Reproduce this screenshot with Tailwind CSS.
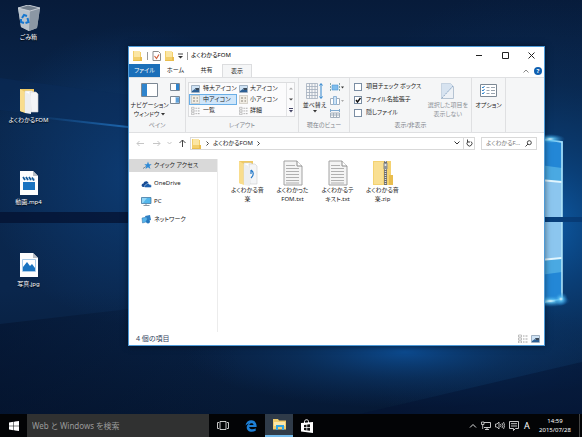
<!DOCTYPE html>
<html lang="ja">
<head>
  <meta charset="UTF-8" />
  <meta name="viewport" content="width=device-width, initial-scale=1.0"/>
  <title>よくわかるFOM</title>
  <script src="https://cdn.jsdelivr.net/npm/@tailwindcss/browser@4"></script>
</head>
<body class="h-screen flex flex-col overflow-hidden bg-[#06183a] font-['Noto_Sans','Noto_Sans_CJK_JP',sans-serif] text-[6px] leading-[9px] text-[#222] [font-feature-settings:'palt']">

  <!-- Shared shapes -->
  <svg class="hidden">
    <symbol id="folder" viewBox="0 0 9 11">
      <path d="M0 1h4l1 1h3v8H0z" fill="#f3cf6b"/>
      <path d="M1 1h6v6H1z" fill="#fbe6a4"/>
      <path d="M7 7h2v4H0V10h7z" fill="#e9bd4e"/>
    </symbol>
    <symbol id="text-file" viewBox="0 0 20 26">
      <path d="M1 1h13l5 5v19H1z" fill="#f4f4f4" stroke="#a2a2a2"/>
      <path d="M14 1v5h5" fill="#fff" stroke="#8c8c8c"/>
      <path d="M3 5.500h9M3 8.500h13M3 11.500h13M3 14.500h13M3 17.500h13M3 20.500h13M3 23h13" stroke="#b0b0b0"/>
    </symbol>
    <symbol id="open-folder" viewBox="0 0 20 26">
      <path d="M1 1h14v23H4l-3-1z" fill="#eec964"/>
      <path d="M1 1l5 3v21l-5-2z" fill="#f9dd8d"/>
      <path d="M6 3h7l2 2v18H6z" fill="#fff" stroke="#d5d5d5" stroke-width=".6"/>
      <path d="M11 4h6l2 2v18h-7z" fill="#f4f5f7" stroke="#cfcfcf" stroke-width=".6"/>
      <path d="M6 4v21l6 1V8l-3-3z" fill="#eceef1"/>
    </symbol>
    <symbol id="list-icon" viewBox="0 0 10 9">
      <path d="M.5 1h3v2h-3zM.5 4h3v2h-3zM.5 7h3v2h-3z" fill="#fff" stroke="#9a9a9a" stroke-width=".6"/>
      <path d="M5 2h1.500M7.500 2H9.500M5 5h1.500M7.500 5H9.500M5 8h1.500M7.500 8H9.500" stroke="#8b8b8b" stroke-width=".8"/>
    </symbol>
    <symbol id="picture" viewBox="0 0 9 8">
      <path d="M.5.5h8v7h-8z" fill="#cfe3f5" stroke="#9fb0c2"/>
      <path d="M1 6l3-2 1 1 3-2v4H1z" fill="#2c5f94"/>
      <path d="M4 3h4v2H5z" fill="#3a4a5a"/>
    </symbol>
    <symbol id="tiles" viewBox="0 0 9 9">
      <path d="M.5.5h8v8h-8z" fill="#f1ede4" stroke="#b8b2a6" stroke-dasharray="1 1"/>
      <path d="M2 3h2M5.500 3h1.500M2 6h2M5.500 6h1.500" stroke="#8a8478" stroke-width="1.200"/>
    </symbol>
    <symbol id="blank-file" viewBox="0 0 18 24">
      <path d="M0 0h13l5 5v19H0z" fill="#fdfdfd"/>
      <path d="M13 0v5h5z" fill="#b9bfc6"/>
    </symbol>
  </svg>

  <main class="relative flex-1 min-h-0">

    <!-- Wallpaper -->
    <svg class="absolute inset-0 w-full h-full" viewBox="0 0 582 414" preserveAspectRatio="none" aria-hidden="true">
      <defs>
        <radialGradient id="glow" cx="545" cy="225" r="240" gradientUnits="userSpaceOnUse">
          <stop offset="0" stop-color="#0d5ba6"/>
          <stop offset=".25" stop-color="#0a4582" stop-opacity=".8"/>
          <stop offset=".6" stop-color="#0a3464" stop-opacity=".3"/>
          <stop offset="1" stop-color="#0a2d5a" stop-opacity="0"/>
        </radialGradient>
        <radialGradient id="left-glow" cx="135" cy="175" r="150" gradientUnits="userSpaceOnUse">
          <stop offset="0" stop-color="#0d3d76" stop-opacity=".9"/>
          <stop offset="1" stop-color="#0d3d76" stop-opacity="0"/>
        </radialGradient>
        <radialGradient id="floor-glow">
          <stop offset="0" stop-color="#0c4a8e"/>
          <stop offset=".5" stop-color="#0b3566" stop-opacity=".6"/>
          <stop offset="1" stop-color="#0a2d5a" stop-opacity="0"/>
        </radialGradient>
        <radialGradient id="flare">
          <stop offset="0" stop-color="#e8fbff"/>
          <stop offset=".3" stop-color="#5cc4f5" stop-opacity=".8"/>
          <stop offset="1" stop-color="#1a7fd0" stop-opacity="0"/>
        </radialGradient>
        <linearGradient id="beam">
          <stop offset="0" stop-color="#1d66ad" stop-opacity="0"/>
          <stop offset="1" stop-color="#1d66ad"/>
        </linearGradient>
        <linearGradient id="shade">
          <stop offset="0" stop-color="#031029" stop-opacity=".5"/>
          <stop offset="1" stop-color="#031029" stop-opacity="0"/>
        </linearGradient>
        <linearGradient id="base" x2="0" y2="1">
          <stop offset="0" stop-color="#071b3a"/>
          <stop offset=".3" stop-color="#0a284f"/>
          <stop offset=".7" stop-color="#0a264c"/>
          <stop offset="1" stop-color="#061935"/>
        </linearGradient>
      </defs>
      <path d="M0 0h582v414H0z" fill="url(#base)"/>
      <path d="M0 0h582v414H0z" fill="url(#left-glow)"/>
      <path d="M0 0h582v414H0z" fill="url(#glow)"/>
      <ellipse cx="405" cy="352" rx="220" ry="56" fill="url(#floor-glow)"/>
      <path d="M0 78l128 17v32L0 110z" fill="#0a2c59" opacity=".5"/>
      <path d="M30 115l98 11v2L30 117z" fill="url(#beam)"/>
      <path d="M0 212h128v11H0z" fill="#041130" opacity=".75"/>
      <path d="M0 324l240-28v118H0z" fill="url(#shade)"/>
      <path d="M360 414l222-52v52z" fill="#041130" opacity=".45"/>
      <!-- Window panes -->
      <path d="M540 139l23 2-1 76h-22z" fill="#2387d6"/>
      <path d="M540 165l22 3v49h-22z" fill="#4aa9e2"/>
      <path d="M540 180l22 2v35h-22z" fill="#8cc6ef"/>
      <path d="M540 180l22 2" stroke="#e2f6ff" stroke-width="2"/>
      <path d="M540 222h22v77l-22 5z" fill="#2387d6"/>
      <path d="M540 222h22v50l-22 3z" fill="#4aa9e2"/>
      <path d="M540 222h22v36l-22 2z" fill="#8cc6ef"/>
      <path d="M540 260l22-2" stroke="#e2f6ff" stroke-width="2"/>
      <path d="M540 139l22 3v75M562 222v77l-22 4" fill="none" stroke="#b5e9fc" stroke-width="1.500"/>
      <path d="M540 217h42v5h-42z" fill="#06356c" opacity=".7"/>
      <ellipse cx="550" cy="301" rx="20" ry="6" fill="url(#flare)"/>
      <circle cx="561" cy="299" r="7" fill="url(#flare)"/>
      <ellipse cx="550" cy="139" rx="15" ry="5" fill="url(#flare)"/>
    </svg>

    <!-- Desktop icons -->
    <ul class="relative w-[57px] text-white text-center [text-shadow:0_1px_1px_#000]">
      <li class="h-[83px] pt-[5px]">
        <svg class="mx-auto w-[22px] h-[26px]" viewBox="0 0 22 26">
          <path d="M0 3l10-3 12 3-3 20-8 3-8-4z" fill="#aeb8c2"/>
          <path d="M0 3l12 2-1 21-8-4z" fill="#b9c3cc"/>
          <path d="M12 5l10-2-3 20-8 3z" fill="#8b97a4"/>
          <path d="M0 3l10-3 12 3-10 3z" fill="#717e8c" stroke="#d5dbe1" stroke-width=".8"/>
          <path d="M4 13l2-3 3 1M9.500 13l1 4-3 1M6 18l-3-1v-3" fill="none" stroke="#1677cf" stroke-width="2"/>
        </svg>
        <span class="block mt-[2px]">ごみ箱</span>
      </li>
      <li class="h-[82px] pt-[5px]">
        <svg class="mx-auto w-[20px] h-[26px]"><use href="#open-folder"/></svg>
        <span class="block mt-[2px] whitespace-nowrap">よくわかるFOM</span>
      </li>
      <li class="h-[83px] pt-[6px]">
        <svg class="mx-auto w-[18px] h-[24px]" viewBox="0 0 18 24">
          <use href="#blank-file"/>
          <path d="M3 11h12v8H3z" fill="#1a73c0"/>
          <path d="M3 6l12 1v3L3 9z" fill="#d7e7f5"/>
          <path d="M3 6l2 3M6 6l2 3M9 6l2 3M12 6.500l2 3" stroke="#155a99" stroke-width="1.600"/>
        </svg>
        <span class="block mt-[3px]">動画.mp4</span>
      </li>
      <li class="pt-[5px]">
        <svg class="mx-auto w-[18px] h-[24px]" viewBox="0 0 18 24">
          <use href="#blank-file"/>
          <path d="M2.500 6.500h13v12h-13z" fill="#fff" stroke="#a9cbe8"/>
          <path d="M3 18v-4l4-5 3 4 2-2 3 4v3z" fill="#1a73c0"/>
        </svg>
        <span class="block mt-[3px]">写真.jpg</span>
      </li>
    </ul>

    <!-- Explorer window -->
    <section class="absolute left-[128px] right-[37px] top-[46px] bottom-[68px] flex flex-col bg-white border border-[#4e9bd8] shadow-[0_0_6px_rgba(0,0,0,0.5)]">

      <header class="h-[17px] shrink-0 flex items-center pl-1">
        <svg class="w-[9px] h-[11px]"><use href="#folder"/></svg>
        <i class="w-px h-2 ml-[5px] bg-[#999]"></i>
        <button aria-label="プロパティ" class="ml-1">
          <svg class="w-[9px] h-[10px]" viewBox="0 0 9 10"><path d="M1 .5h5.500l2 2v7H1z" fill="#fff" stroke="#8c8c8c"/><path d="M2.500 5l2 2.500L7 3.500" fill="none" stroke="#d2603a" stroke-width="1.200"/></svg>
        </button>
        <button aria-label="新しいフォルダー" class="ml-1"><svg class="w-[9px] h-[11px]"><use href="#folder"/></svg></button>
        <button aria-label="カスタマイズ" class="ml-1"><svg class="w-[5px] h-[6px]" viewBox="0 0 5 6"><path d="M0 1h5" stroke="#444"/><path d="M0 3h5L2.500 5.500z" fill="#333"/></svg></button>
        <i class="w-px h-2 ml-1 bg-[#999]"></i>
        <h1 class="ml-[3px] text-black">よくわかるFOM</h1>
        <div class="ml-auto flex text-black">
          <button aria-label="最小化" class="w-[26px] grid place-items-center"><svg class="w-[7px] h-[7px]" viewBox="0 0 7 7"><path d="M0 3.500h6" stroke="#222"/></svg></button>
          <button aria-label="最大化" class="w-[26px] grid place-items-center"><svg class="w-[7px] h-[7px]" viewBox="0 0 7 7"><path d="M.5.5h6v6h-6z" fill="none" stroke="#222"/></svg></button>
          <button aria-label="閉じる" class="w-[26px] grid place-items-center"><svg class="w-[7px] h-[7px]" viewBox="0 0 7 7"><path d="M.5.5l6 6M6.500.5l-6 6" stroke="#222"/></svg></button>
        </div>
      </header>

      <nav class="h-[13px] shrink-0 flex">
        <button class="w-[31px] bg-[#1b6fb9] text-white">ファイル</button>
        <button class="w-[31px]">ホーム</button>
        <button class="w-[31px]">共有</button>
        <button class="w-[30px] -mb-px bg-[#f5f6f7] border border-b-0 border-[#dcdddf]">表示</button>
        <button aria-label="リボンの最小化" class="ml-auto"><svg class="w-[6px] h-[4px]" viewBox="0 0 6 4"><path d="M.5 3.500L3 1l2.500 2.500" fill="none" stroke="#888"/></svg></button>
        <button aria-label="ヘルプ" class="mx-[2px] ml-[5px] self-center size-[8px] rounded-full bg-[#0f5fb0] text-white leading-[8px] font-bold">?</button>
      </nav>

      <!-- Ribbon -->
      <div class="h-[56px] shrink-0 flex bg-[#f5f6f7] border-y border-[#dfe0e2] overflow-hidden whitespace-nowrap">
        <div class="w-[57px] flex flex-col border-r border-[#dfe0e2]">
          <div class="flex-1 flex pt-[5px]">
            <button class="w-[41px] flex flex-col items-center leading-[9px]">
              <svg class="w-[17px] h-[14px] mb-1" viewBox="0 0 17 14"><path d="M.5.5h16v13H.5z" fill="#fff" stroke="#7c8894"/><path d="M1 1h5v12H1z" fill="#2f84cd"/></svg>
              ナビゲーション<br>
              <span class="flex items-center gap-[2px]">ウィンドウ<svg class="w-[4px] h-[3px]" viewBox="0 0 4 3"><path d="M0 0h4L2 2.500z" fill="#333"/></svg></span>
            </button>
            <div class="flex flex-col gap-[5px]">
              <button aria-label="プレビュー ウィンドウ"><svg class="w-[10px] h-[8px]" viewBox="0 0 10 8"><path d="M.5.5h9v7h-9z" fill="#fff" stroke="#7c8894"/><path d="M6 1h3v6H6z" fill="#2f84cd"/></svg></button>
              <button aria-label="詳細ウィンドウ"><svg class="w-[10px] h-[8px]" viewBox="0 0 10 8"><path d="M.5.5h9v7h-9z" fill="#fff" stroke="#7c8894"/><path d="M5.500 1h3.500v6H5.500z" fill="#8dbde6"/><path d="M6 3h3M6 5h3" stroke="#2f84cd"/></svg></button>
            </div>
          </div>
          <p class="pb-[2px] text-center text-[#7f848b]">ペイン</p>
        </div>

        <div class="w-[113px] flex flex-col border-r border-[#dfe0e2]">
          <div class="flex-1 pt-1 pl-[2px] pr-[3px]">
            <div class="flex h-[35px] bg-[#fbfbfc] border border-[#dcdddf]">
              <div class="flex-1 grid grid-cols-[48px_1fr] grid-rows-3">
                <button class="flex items-center gap-[3px] px-[2px]"><svg class="w-[9px] h-[8px] shrink-0"><use href="#picture"/></svg>特大アイコン</button>
                <button class="flex items-center gap-[2px] px-[2px]"><svg class="w-[9px] h-[8px] shrink-0"><use href="#picture"/></svg>大アイコン</button>
                <button aria-pressed="true" class="flex items-center gap-[3px] px-px bg-[#cfe6fa] border border-[#6aaee6]"><svg class="w-[9px] h-[9px] shrink-0"><use href="#tiles"/></svg>中アイコン</button>
                <button class="flex items-center gap-[2px] px-[2px]"><svg class="w-[9px] h-[9px] shrink-0"><use href="#tiles"/></svg>小アイコン</button>
                <button class="flex items-center gap-[3px] px-[2px]"><svg class="w-[9px] h-[9px] shrink-0"><use href="#list-icon"/></svg>一覧</button>
                <button class="flex items-center gap-[2px] px-[2px]"><svg class="w-[9px] h-[9px] shrink-0"><use href="#list-icon"/></svg>詳細</button>
              </div>
              <div class="w-[8px] grid grid-rows-3 place-items-center border-l border-[#e3e4e6]">
                <button aria-label="上へ"><svg class="w-1 h-[3px]" viewBox="0 0 4 3"><path d="M0 2.500h4L2 .5z" fill="#aaa"/></svg></button>
                <button aria-label="下へ"><svg class="w-1 h-[3px]" viewBox="0 0 4 3"><path d="M0 .5h4l-2 2z" fill="#444"/></svg></button>
                <button aria-label="その他"><svg class="w-1 h-[5px]" viewBox="0 0 4 5"><path d="M0 .5h4" stroke="#446"/><path d="M0 2h4L2 4.500z" fill="#446"/></svg></button>
              </div>
            </div>
          </div>
          <p class="pb-[2px] text-center text-[#7f848b]">レイアウト</p>
        </div>

        <div class="w-[51px] flex flex-col border-r border-[#dfe0e2]">
          <div class="flex-1 flex pt-[5px]">
            <button class="w-[31px] flex flex-col items-center">
              <svg class="w-[17px] h-[16px] mb-[2px]" viewBox="0 0 17 16"><path d="M.5.500h11v15H.5zM.5 3.500h11M.5 6.500h11M.5 9.500h11M.5 12.500h11M3.500.5v15M6 .5v15M9 .5v15" fill="none" stroke="#a3afbc" stroke-width=".8"/><path d="M15 1v14M13.500 2.500L15 .5l1.500 2M13.500 13.500l1.500 2 1.500-2" fill="none" stroke="#2f84cd"/></svg>
              並べ替え
              <svg class="w-[4px] h-[3px]" viewBox="0 0 4 3"><path d="M0 0h4L2 2.500z" fill="#333"/></svg>
            </button>
            <div class="flex flex-col gap-1">
              <button aria-label="グループ化"><svg class="w-[14px] h-[9px]" viewBox="0 0 14 9"><path d="M.5 0v9M9.500 0v9" stroke="#8aa" stroke-dasharray="2 1"/><path d="M2 2h6v5H2z" fill="#7fbdec" stroke="#4c99d6" stroke-width=".6"/><path d="M11 3.500h3l-1.500 2z" fill="#333"/></svg></button>
              <button aria-label="列の追加"><svg class="w-[14px] h-[9px]" viewBox="0 0 14 9"><path d="M.5 2.500h3v6h-3zM6.500 2.500h3v6h-3z" fill="#fff" stroke="#a3afbc"/><path d="M3.500.5h3v8h-3z" fill="#cfe3f5" stroke="#8fb4d6"/><path d="M11 4h3l-1.500 2z" fill="#aaa"/></svg></button>
              <button aria-label="列のサイズ変更"><svg class="w-[14px] h-[9px]" viewBox="0 0 14 9"><path d="M.5 0v3M9.500 0v3M1 1.500h8" stroke="#7fa9cf"/><path d="M.5 4h9v4.500h-9zM.5 6h9M3.500 4v4.500M6.500 4v4.500" fill="none" stroke="#a3afbc"/></svg></button>
            </div>
          </div>
          <p class="pb-[2px] text-center text-[#7f848b]">現在のビュー</p>
        </div>

        <div class="w-[122px] flex flex-col border-r border-[#dfe0e2]">
          <div class="flex-1 flex justify-between pt-1 pl-1 pr-[3px]">
            <div class="flex flex-col gap-1">
              <label class="flex items-center gap-1"><input type="checkbox" class="appearance-none size-[8px] bg-white border border-[#7a8da3]">項目チェック ボックス</label>
              <label class="flex items-center gap-1">
                <span class="grid">
                  <input type="checkbox" checked class="col-start-1 row-start-1 appearance-none size-[8px] bg-white border border-[#7a8da3]">
                  <svg class="col-start-1 row-start-1 size-[8px] pointer-events-none" viewBox="0 0 8 8"><path d="M2 4l1.500 2L6.500 2" fill="none" stroke="#111" stroke-width="1.400"/></svg>
                </span>
                ファイル名拡張子
              </label>
              <label class="flex items-center gap-1"><input type="checkbox" class="appearance-none size-[8px] bg-white border border-[#7a8da3]">隠しファイル</label>
            </div>
            <button disabled class="flex flex-col items-center pt-px text-[#8d9298]">
              <svg class="w-[13px] h-[16px] mb-[2px]" viewBox="0 0 13 16"><path d="M.5.5h9l3 3v12H.5z" fill="#edf1f6" stroke="#b5c3d2"/><path d="M.5 15.500v-15h9l3 3z" fill="#d7e3f0"/><path d="M.5 15.500l12-13" stroke="#8fa9c5" stroke-dasharray="2 1"/></svg>
              選択した項目を<br>表示しない
            </button>
          </div>
          <p class="pb-[2px] text-center text-[#7f848b]">表示/非表示</p>
        </div>

        <div class="w-[34px] border-r border-[#dfe0e2] pt-[6px]">
          <button class="w-full flex flex-col items-center">
            <svg class="w-[17px] h-[13px] mb-1" viewBox="0 0 17 13"><path d="M.5.5h16v12H.5z" fill="#fff" stroke="#7c8894"/><path d="M2 3l1 1 1.500-2M2 6l1 1 1.500-2M2 9l1 1 1.500-2" fill="none" stroke="#2f84cd"/><path d="M6.500 3.500h3M11 3.500h4M6.500 6.500h3M11 6.500h4M6.500 9.500h3M11 9.500h4" stroke="#9aa5b0"/></svg>
            オプション
          </button>
        </div>
      </div>

      <!-- Address bar -->
      <div class="h-[20px] shrink-0 flex items-center pl-[7px] pr-[7px]">
        <button aria-label="戻る"><svg class="w-[8px] h-[7px]" viewBox="0 0 8 7"><path d="M8 3.500H1M3.500 1L1 3.500 3.500 6" fill="none" stroke="#c6c6c6"/></svg></button>
        <button aria-label="進む" class="ml-[9px]"><svg class="w-[8px] h-[7px]" viewBox="0 0 8 7"><path d="M0 3.500h7M4.500 1L7 3.500 4.500 6" fill="none" stroke="#c6c6c6"/></svg></button>
        <button aria-label="最近表示した場所" class="ml-[6px]"><svg class="w-[5px] h-[4px]" viewBox="0 0 5 4"><path d="M.5 1l2 2 2-2" fill="none" stroke="#c6c6c6"/></svg></button>
        <button aria-label="上へ" class="ml-[7px]"><svg class="w-[7px] h-[8px]" viewBox="0 0 7 8"><path d="M3.500 8V1M.5 4l3-3 3 3" fill="none" stroke="#444"/></svg></button>
        <div class="ml-1 flex-1 h-[13px] flex items-center border border-[#d9d9d9]">
          <svg class="ml-px w-[9px] h-[11px]"><use href="#folder"/></svg>
          <svg class="ml-[5px] w-[3px] h-[5px]" viewBox="0 0 3 5"><path d="M.5.5l2 2-2 2" fill="none" stroke="#444"/></svg>
          <a href="#" class="ml-1">よくわかるFOM</a>
          <svg class="ml-1 w-[3px] h-[5px]" viewBox="0 0 3 5"><path d="M.5.5l2 2-2 2" fill="none" stroke="#444"/></svg>
          <button aria-label="履歴" class="ml-auto mr-[3px]"><svg class="w-[6px] h-[4px]" viewBox="0 0 6 4"><path d="M.5.500l2.500 2.500 2.500-2.500" fill="none" stroke="#333"/></svg></button>
          <button aria-label="更新" class="w-[11px] h-full grid place-items-center border-l border-[#d9d9d9]"><svg class="w-[7px] h-[8px]" viewBox="0 0 7 8"><path d="M5 2.500a2.500 2.500 0 1 1-3 0M1.500.5v2.500h2.500" fill="none" stroke="#444"/></svg></button>
        </div>
        <div class="ml-[6px] w-[56px] h-[13px] flex items-center border border-[#d9d9d9] pl-1 pr-1">
          <input type="text" aria-label="検索" placeholder="よくわかるF..." class="flex-1 min-w-0 outline-none placeholder:text-[#777]">
          <svg class="w-[7px] h-[7px]" viewBox="0 0 7 7"><circle cx="4.300" cy="2.700" r="2" fill="none" stroke="#444"/><path d="M3 4L.5 6.500" stroke="#444"/></svg>
        </div>
      </div>

      <div class="flex-1 min-h-0 flex">
        <nav class="w-[89px] mt-[6px] flex flex-col gap-[5px] border-r border-[#ececec]">
          <a href="#" class="h-[13px] flex items-center gap-[2px] pl-[14px] bg-[#d9d9d9]">
            <svg class="w-[9px] h-[9px]" viewBox="0 0 9 9"><path d="M5 .5l1 2.700h2.700L6.600 5l.8 3L5 6.300 2.500 8l.8-3-2-1.800H4z" fill="#2f8ad6"/><path d="M0 7.500l3-2" stroke="#7d8a96"/></svg>クイック アクセス
          </a>
          <a href="#" class="h-[13px] flex items-center gap-[2px] pl-[12px]">
            <svg class="w-[11px] h-[8px]" viewBox="0 0 11 8"><path d="M1 6.500C0 5 1 3.500 2.500 3.500 3 1 6.500.5 7.500 3L4 7H2z" fill="#154a93"/><path d="M4 7.500c-1.300-1-.5-2.700 1-2.700C5.500 3 8 3 8.600 4.600 10.500 4.500 11 6.500 10 7.500z" fill="#1b5fae" stroke="#fff" stroke-width=".4"/></svg>OneDrive
          </a>
          <a href="#" class="h-[13px] flex items-center gap-[2px] pl-[12px]">
            <svg class="w-[11px] h-[9px]" viewBox="0 0 11 9"><path d="M.5.500h9.500v6H.5z" fill="#53b7ec" stroke="#3a6f9a" stroke-width=".7"/><path d="M1 1h5L2 6H1z" fill="#93d6f7"/><path d="M2.500 8.500h6M5 7v1.500" stroke="#8a98a5"/></svg>PC
          </a>
          <a href="#" class="h-[13px] flex items-center gap-[2px] pl-[12px]">
            <svg class="w-[11px] h-[9px]" viewBox="0 0 11 9"><path d="M4 1l5-1 1 5-4 1z" fill="#2e7fc4"/><path d="M1 3l5-1 .5 4.500L1.500 8z" fill="#56b4ea" stroke="#2a6ca8" stroke-width=".5"/><circle cx="7" cy="6.500" r="2" fill="#2376bd"/></svg>ネットワーク
          </a>
        </nav>
        <ul class="flex-1 flex flex-wrap content-start pt-[7px] pl-[7px] text-center">
          <li class="w-[45px]">
            <svg class="mx-auto w-[20px] h-[26px]" viewBox="0 0 20 26"><use href="#open-folder"/><path d="M13 10c3 2 3 5 0 8M13 10v4" fill="none" stroke="#2378c8" stroke-width="1.200"/></svg>
            よくわかる音<br>楽
          </li>
          <li class="w-[45px]"><svg class="mx-auto w-[20px] h-[26px]"><use href="#text-file"/></svg>よくわかった<br>FOM.txt</li>
          <li class="w-[45px]"><svg class="mx-auto w-[20px] h-[26px]"><use href="#text-file"/></svg>よくわかるテ<br>キスト.txt</li>
          <li class="w-[45px]">
            <svg class="mx-auto w-[20px] h-[26px]" viewBox="0 0 20 26"><path d="M0 1h18v14h2v10H0z" fill="#f4d271"/><path d="M1 2h9v22H1z" fill="#f9df92"/><path d="M16 15h4v10h-4z" fill="#e9bd4e"/><path d="M12.500 1v24" stroke="#6f6f6f" stroke-width="3"/><path d="M12.500 1v24" stroke="#ddd" stroke-width="1.500" stroke-dasharray="1 1"/><path d="M10.500 3h4v6h-4z" fill="#8e9399"/><circle cx="12.500" cy="5" r="1" fill="#eee"/></svg>
            よくわかる音<br>楽.zip
          </li>
        </ul>
      </div>

      <footer class="h-[13px] shrink-0 flex items-center px-[7px] pr-1 text-[7px] text-[#33445e]">
        4 個の項目
        <button aria-label="詳細表示" class="ml-auto"><svg class="w-[10px] h-[9px]"><use href="#list-icon"/></svg></button>
        <button aria-label="大きい縮小版" class="ml-[3px]"><svg class="w-[9px] h-[8px]"><use href="#picture"/></svg></button>
      </footer>
    </section>
  </main>

  <!-- Taskbar -->
  <footer class="h-[23px] shrink-0 flex bg-[#030406] text-white">
    <button aria-label="スタート" class="w-[27px] grid place-items-center"><svg class="w-[10px] h-[10px]" viewBox="0 0 10 10"><path d="M0 1.500L4.500.8v3.900H0zM5 .7L10 0v4.700H5zM0 5.300h4.500v3.900L0 8.500zM5 5.300h5V10l-5-.7z" fill="#fff"/></svg></button>
    <input type="text" aria-label="検索" placeholder="Web と Windows を検索" class="w-[182px] px-[5px] bg-[#303131] text-[8px] outline-none placeholder:text-[#9a9a9a]">
    <button aria-label="タスク ビュー" class="w-[28px] grid place-items-center"><svg class="w-[12px] h-[9px]" viewBox="0 0 12 9"><path d="M3 .5h6v8H3zM2 1.500H.5v6H2M10 1.500h1.500v6H10" fill="none" stroke="#ddd" stroke-width=".9"/></svg></button>
    <button aria-label="Edge" class="w-[28px] grid place-items-center"><svg class="w-[12px] h-[12px]" viewBox="0 0 12 12"><path d="M.5 5.500C1 2 3.500.2 6.300.2 9.800.2 11.800 3 11.600 6.900H4.200c.2 2.400 3.800 3 6.500 1.400v2.500C6.500 13 1.700 11.500 1.700 7.500c0-2 1.100-3.300 2.600-4.100C2.800 3.700 1.400 4.500.5 5.500zM4.300 5h4.200C8.500 2.500 4.700 2.600 4.300 5z" fill="#1d7fd6"/></svg></button>
    <button aria-label="エクスプローラー" class="w-[28px] grid place-items-center bg-[#2f3b49] border-b-2 border-[#71b9ea]"><svg class="w-[13px] h-[11px]" viewBox="0 0 13 11"><path d="M0 0h5l1 1.500h7V10.500H0z" fill="#f1cd6c"/><path d="M1 3h11v4H1z" fill="#fbe7a8"/><path d="M3 11V6h8v5H9V8H5v3z" fill="#31a5e4"/></svg></button>
    <button aria-label="ストア" class="w-[28px] grid place-items-center"><svg class="w-[12px] h-[14px]" viewBox="0 0 12 14"><path d="M0 4l12-1v11L0 12.500z" fill="#fff"/><path d="M3.500 4.500V2.500c0-2.200 4-2.500 4 0v2" fill="none" stroke="#fff"/><path d="M3 6l2.500-.3v2.500H3zM6.200 5.600L9 5.300v2.900H6.200zM3 8.900h2.500v2.500L3 11.100zM6.200 8.900H9v2.900l-2.800-.3z" fill="#111"/></svg></button>
    <div class="ml-auto flex items-center gap-1">
      <button aria-label="隠れているインジケーター"><svg class="w-[8px] h-[5px]" viewBox="0 0 8 5"><path d="M1 4.500l3-3 3 3" fill="none" stroke="#ddd"/></svg></button>
      <button aria-label="ネットワーク"><svg class="w-[10px] h-[9px]" viewBox="0 0 10 9"><path d="M3 1.500h6.500v5H3M6 6.500v2M4 8.500h4" fill="none" stroke="#ddd" stroke-width=".9"/><path d="M.5 1h2.500v2.500H.5zM1.700 3.500v4.500" fill="none" stroke="#ddd" stroke-width=".8"/></svg></button>
      <button aria-label="音量"><svg class="w-[10px] h-[9px]" viewBox="0 0 10 9"><path d="M.5 3h1.500L4 1v7L2 6H.5zM5.500 3q1 1.500 0 3M7 2q2 2.500 0 5M8.500 1q2.500 3.500 0 7" fill="none" stroke="#ddd" stroke-width=".8"/></svg></button>
      <button aria-label="アクション センター"><svg class="w-[10px] h-[10px]" viewBox="0 0 10 10"><path d="M.5.5h9v7H6.500l-2 2v-2h-4zM2 2.700h6M2 5h6" fill="none" stroke="#ddd" stroke-width=".9"/></svg></button>
      <button aria-label="入力モード" class="w-2 text-[9px]">A</button>
      <button class="w-[40px] text-center">14:59<br>2015/07/28</button>
      <i class="w-px h-full mr-[2px] bg-[#444]"></i>
    </div>
  </footer>
</body>
</html>
